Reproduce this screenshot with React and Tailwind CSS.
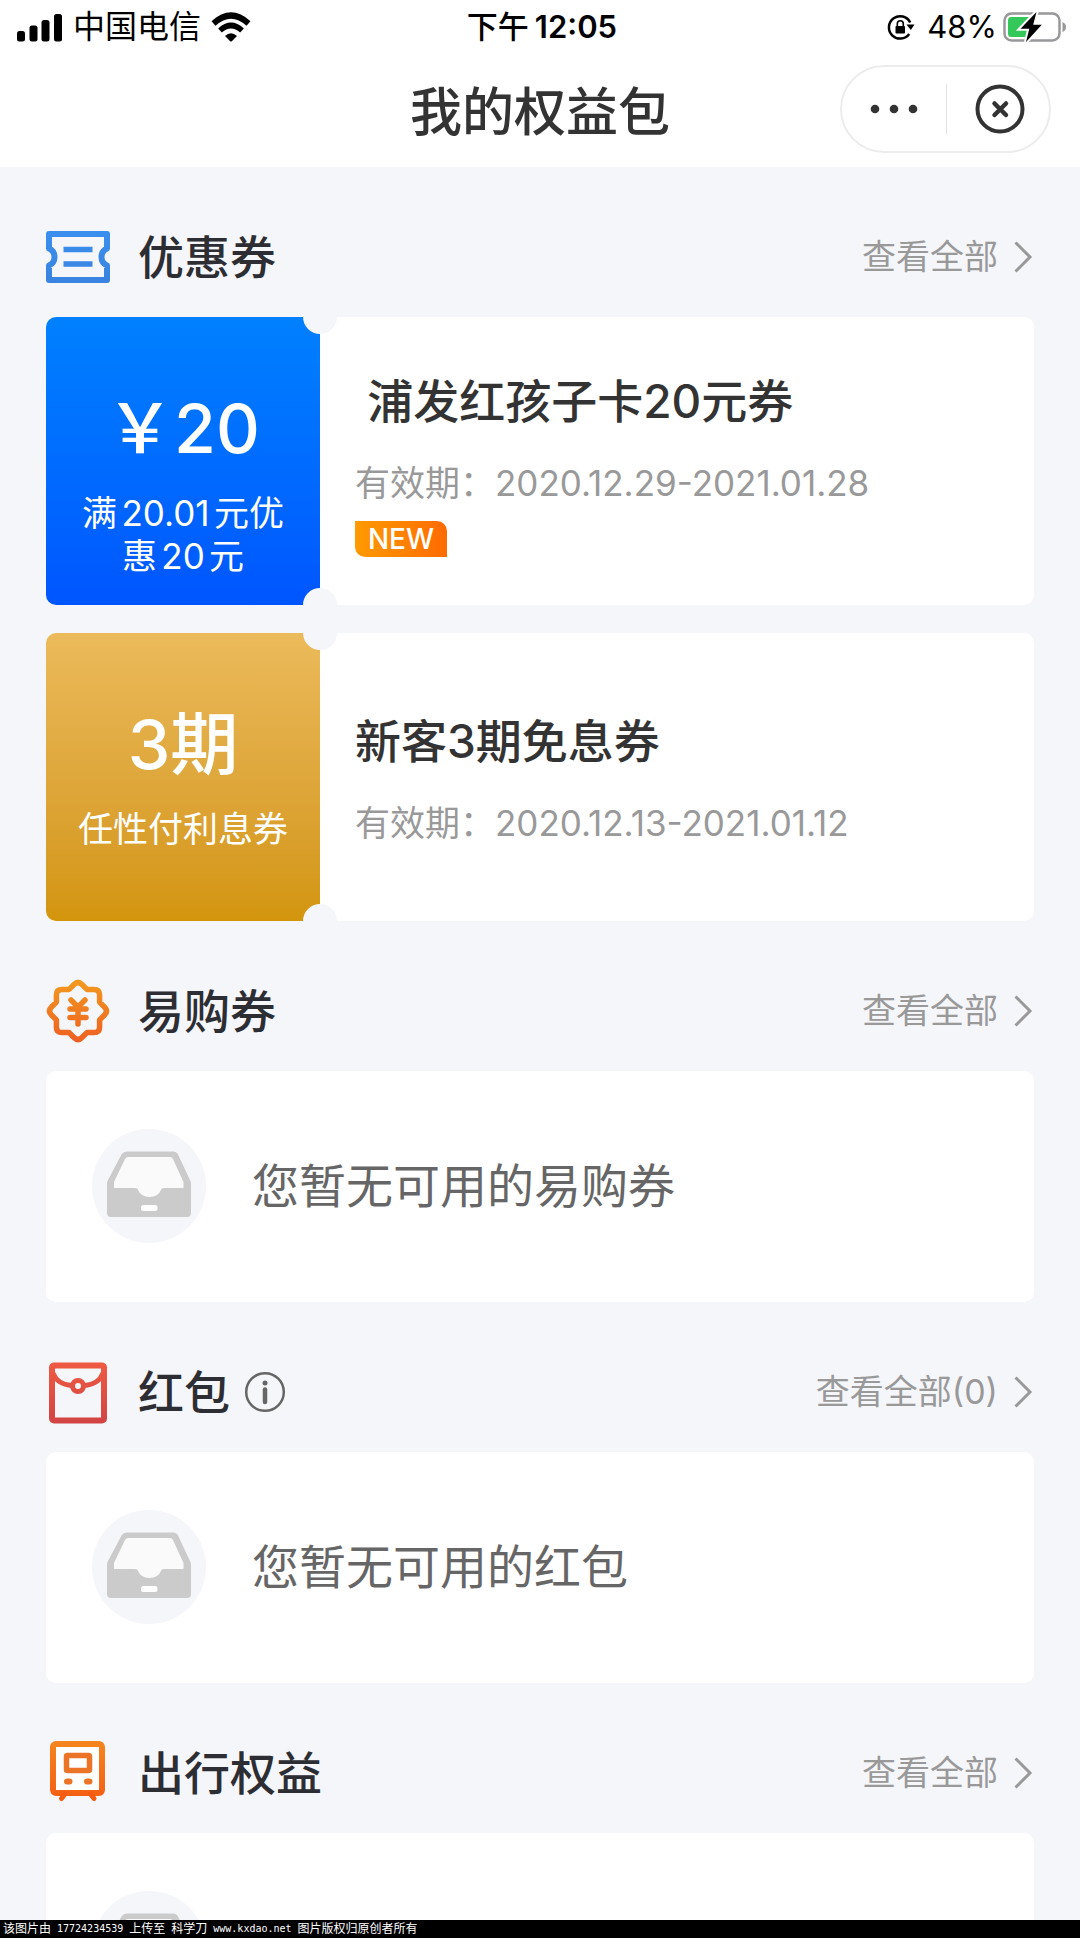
import React from "react";

function SignalIcon() {
  return (
    <svg className="h-[30px] w-[46px]" viewBox="0 0 46 30" aria-hidden="true">
      <rect x="0" y="19" width="8" height="10.5" rx="2.5" />
      <rect x="12.5" y="13.5" width="8" height="16" rx="2.5" />
      <rect x="24.5" y="8" width="8" height="21.5" rx="2.5" />
      <rect x="37" y="2" width="8" height="27.5" rx="2.5" />
    </svg>
  );
}

function WifiIcon() {
  return (
    <svg className="h-[30px] w-[40px]" viewBox="0 0 40 30" aria-hidden="true">
      <path d="M2.5 11.5Q20 -4.5 37.5 11.5" fill="none" stroke="#000" strokeWidth="6" />
      <path d="M9 18.5Q20 8.5 31 18.5" fill="none" stroke="#000" strokeWidth="5.5" />
      <path d="M14 24Q20 18.5 26 24L20.8 29.2Q20 30 19.2 29.2Z" />
    </svg>
  );
}

function RotationLockIcon() {
  return (
    <svg className="h-[28px] w-[28px]" viewBox="0 0 28 28" aria-hidden="true">
      <path d="M23.2 9.5A11.2 11.2 0 1 0 22.2 21" fill="none" stroke="#000" strokeWidth="2.5" />
      <path d="M19.5 11.5H27.5L23.8 17Z" />
      <rect x="8.5" y="13" width="9.5" height="7.5" rx="1" />
      <path d="M10.3 13.5V10.8a3 3 0 0 1 6 0V13.5" fill="none" stroke="#000" strokeWidth="1.6" />
    </svg>
  );
}

function BatteryIcon() {
  return (
    <svg className="h-[32px] w-[64px]" viewBox="0 0 64 32" aria-hidden="true">
      <rect x="1.5" y="2.5" width="55" height="27" rx="7" fill="#fff" stroke="#98989b" strokeWidth="2.5" />
      <path d="M8.5 6H28V26H8.5a3.5 3.5 0 0 1 -3.5 -3.5V9.5a3.5 3.5 0 0 1 3.5 -3.5Z" fill="#34c759" />
      <path d="M59.5 11Q63 12.500 63 16T59.5 21Z" fill="#98989b" />
      <path d="M33.5 1L17.5 17.8H26.3L23 31L38.8 13.8H30.2Z" fill="#000" stroke="#fff" strokeWidth="4" paintOrder="stroke" />
    </svg>
  );
}

function StatusBar() {
  return (
    <div className="grid h-[54px] grid-cols-3 items-center pl-[17px] pr-[13px] text-[31px] leading-[40px] text-black">
      <div className="flex items-center gap-[10px]">
        <SignalIcon />
        <span className="text-[32px]">中国电信</span>
        <WifiIcon />
      </div>
      <div className="flex items-center justify-center gap-[6px] font-semibold">
        <span className="font-medium">下午</span>
        <span>12:05</span>
      </div>
      <div className="flex items-center justify-end gap-[6px]">
        <div className="flex items-center gap-3">
          <RotationLockIcon />
          <span>48%</span>
        </div>
        <BatteryIcon />
      </div>
    </div>
  );
}

function NavBar() {
  return (
    <div className="grid h-[113px] grid-cols-[1fr_auto_1fr] items-center px-[29px]">
      <h1 className="col-start-2 pt-1 text-[52px] font-medium leading-[72px] text-[#333]">我的权益包</h1>
      <div className="mb-[3px] flex h-[88px] w-[211px] items-center justify-self-end rounded-full border-2 border-[#ececec] bg-white">
        <button type="button" aria-label="更多" className="flex h-full w-[104px] items-center justify-center">
          <svg className="h-[10px] w-[48px]" viewBox="0 0 48 10" fill="#333" aria-hidden="true">
            <circle cx="5" cy="5" r="4.3" />
            <circle cx="24" cy="5" r="4.3" />
            <circle cx="43" cy="5" r="4.3" />
          </svg>
        </button>
        <span className="h-[50px] w-px bg-[#e2e2e2]" />
        <button type="button" aria-label="关闭" className="flex h-full flex-1 items-center justify-center pl-1">
          <svg className="h-[50px] w-[50px]" viewBox="0 0 50 50" fill="none" stroke="#333" aria-hidden="true">
            <circle cx="25" cy="25" r="22.5" strokeWidth="4" />
            <path d="M19.5 19.5L31 31M31 19.5L19.5 31" strokeWidth="4.5" strokeLinecap="round" />
          </svg>
        </button>
      </div>
    </div>
  );
}

function TicketIcon() {
  return (
    <svg className="h-[52px] w-[64px]" viewBox="0 0 64 52" fill="none" aria-hidden="true">
      <defs>
        <linearGradient id="ticket" gradientUnits="userSpaceOnUse" x1="0" y1="0" x2="0" y2="52">
          <stop offset="0" stopColor="#3a8fee" />
          <stop offset="1" stopColor="#3a83e0" />
        </linearGradient>
      </defs>
      <g stroke="url(#ticket)" strokeWidth="6" strokeLinejoin="round">
        <path d="M3 3H61V17.5Q55.5 20 55.5 26T61 34.5V49H3V34.5Q8.5 32 8.5 26T3 17.5Z" />
        <path d="M17.5 18.5H46.5M17.5 33H46.5" strokeWidth="5.5" />
      </g>
    </svg>
  );
}

function YenBadgeIcon() {
  return (
    <svg className="h-[64px] w-[64px]" viewBox="-32 -32 64 64" fill="none" aria-hidden="true">
      <defs>
        <linearGradient id="yen" gradientUnits="userSpaceOnUse" x1="0" y1="-31" x2="0" y2="31">
          <stop offset="0" stopColor="#f29a1f" />
          <stop offset="1" stopColor="#ee5f22" />
        </linearGradient>
      </defs>
      <g stroke="url(#yen)" strokeLinecap="round" strokeLinejoin="round">
        <path
          strokeWidth="5.5"
          d="M-4 -26.5Q0 -30.5 4 -26.5L8.900 -21.6H16Q21.6 -21.6 21.6 -16V-8.900L26.5 -4Q30.5 0 26.5 4L21.6 8.900V16Q21.6 21.6 16 21.6H8.900L4 26.5Q0 30.5 -4 26.5L-8.900 21.6H-16Q-21.6 21.6 -21.6 16V8.900L-26.5 4Q-30.5 0 -26.5 -4L-21.6 -8.900V-16Q-21.6 -21.6 -16 -21.6H-8.900Z"
        />
        <path strokeWidth="5.5" d="M-7 -11L0 -4L7 -11M-8 -2H8M-8 6.5H8M0 -4V13" />
      </g>
    </svg>
  );
}

function EnvelopeIcon() {
  return (
    <svg className="h-[64px] w-[64px]" viewBox="0 -2 64 64" fill="none" aria-hidden="true">
      <defs>
        <linearGradient id="envelope" gradientUnits="userSpaceOnUse" x1="0" y1="0" x2="0" y2="62">
          <stop offset="0" stopColor="#ef5a42" />
          <stop offset="1" stopColor="#d14444" />
        </linearGradient>
      </defs>
      <g stroke="url(#envelope)">
        <rect x="6" y="3.5" width="52" height="55" rx="2" strokeWidth="6" />
        <path d="M7 11Q11 22 25 23.5M57 11Q53 22 39 23.5" strokeWidth="5" />
        <circle cx="32" cy="24" r="5.5" strokeWidth="5" />
      </g>
    </svg>
  );
}

function TrainIcon() {
  return (
    <svg className="h-[64px] w-[64px]" viewBox="0 0 64 64" fill="none" aria-hidden="true">
      <defs>
        <linearGradient id="train" gradientUnits="userSpaceOnUse" x1="0" y1="0" x2="0" y2="60">
          <stop offset="0" stopColor="#f5861f" />
          <stop offset="1" stopColor="#f55c12" />
        </linearGradient>
      </defs>
      <rect x="7" y="3" width="49" height="49" rx="3" fill="#fff" stroke="url(#train)" strokeWidth="6" />
      <g stroke="#ec7426">
        <rect x="20.5" y="14.5" width="23" height="15" rx="1" strokeWidth="5.5" />
        <path d="M21 40.5H23.5M41 40.5H43.5" strokeWidth="6" strokeLinecap="round" />
      </g>
      <path d="M19 53L15.5 57.5M44.5 53L48 57.5" stroke="#f55c12" strokeWidth="5" strokeLinecap="round" />
    </svg>
  );
}

function Chevron() {
  return (
    <svg className="h-[32px] w-[20px]" viewBox="0 0 20 32" fill="none" aria-hidden="true">
      <path d="M1.5 1.5L16 16L1.5 30.5" stroke="#999" strokeWidth="3" />
    </svg>
  );
}

function InfoButton() {
  return (
    <button type="button" aria-label="红包说明" className="ml-[14px]">
      <svg className="h-[42px] w-[42px]" viewBox="0 0 42 42" fill="none" stroke="#666" aria-hidden="true">
        <circle cx="21" cy="21" r="18.8" strokeWidth="2.5" />
        <circle cx="21" cy="12" r="2.5" fill="#666" stroke="none" />
        <path d="M21 18.5V31" strokeWidth="4.5" strokeLinecap="round" />
      </svg>
    </button>
  );
}

function Section({ icon, title, extra, more, children }) {
  return (
    <section>
      <header className="flex items-center justify-between pb-[30px] pt-[60px]">
        <div className="flex h-[60px] items-center">
          {icon}
          <h2 className="ml-7 text-[46px] font-medium leading-[60px] text-[#2d2e33]">{title}</h2>
          {extra}
        </div>
        <a href="#all" className="flex items-center gap-4 text-[34px] leading-[48px] text-[#999]">
          {more}
          <Chevron />
        </a>
      </header>
      {children}
    </section>
  );
}

function Coupon({ tone, amount, rule, name, period, isNew }) {
  return (
    <article className="relative flex h-[288px] overflow-hidden rounded-[10px] bg-white">
      <div className={`w-[274px] shrink-0 px-8 pt-[69px] text-center text-white ${tone}`}>
        <p className="whitespace-nowrap text-[68px] font-medium leading-[84px]">{amount}</p>
        <p className="mt-[22px] text-[35px] leading-[43px] [text-autospace:normal]">{rule}</p>
      </div>
      <div className="flex flex-1 flex-col items-start justify-center pl-[35px] pt-1">
        <h3 className="whitespace-pre text-[46px] font-medium leading-[64px] text-[#333]">{name}</h3>
        <p className="mt-6 text-[35px] leading-[52px] text-[#999]">有效期：{period}</p>
        {isNew && (
          <span className="mt-3 flex h-[36px] w-[92px] items-center justify-center rounded-bl-[10px] rounded-tr-[10px] bg-linear-to-r from-[#ff9a00] to-[#ff6a00] text-[28px] font-medium leading-[36px] text-white">
            NEW
          </span>
        )}
      </div>
      <span className="absolute -top-[17px] left-[257px] size-[34px] rounded-full bg-[#f5f6fa]" />
      <span className="absolute -bottom-[17px] left-[257px] size-[34px] rounded-full bg-[#f5f6fa]" />
    </article>
  );
}

function InboxIcon() {
  return (
    <svg className="size-[114px] shrink-0" viewBox="0 0 114 114" aria-hidden="true">
      <circle cx="57" cy="57" r="57" fill="#f5f6fa" />
      <path d="M35.5 22.5H81Q84.5 22.5 86 25.5L98 51Q99 53 99 55V84Q99 88 95 88H19Q15 88 15 84V55Q15 53 16 51L29.5 25.5Q31.5 22.5 35.5 22.5Z" fill="#cbcbcb" />
      <path d="M36 28H78Q80 28 81 30L91.5 53V59H72.5Q69 59 69 61Q66 68 57.5 68T46 61Q46 59 42.5 59H22V53L33 30Q34 28 36 28Z" fill="#fafafa" />
      <rect x="49" y="76" width="16.5" height="6" rx="2.5" fill="#fff" />
    </svg>
  );
}

function EmptyCard({ text }) {
  return (
    <div className="flex h-[231px] items-center gap-[46px] rounded-[10px] bg-white px-[46px] pb-[2px]">
      <InboxIcon />
      {text && <p className="text-[47px] leading-[64px] text-[#666]">{text}</p>}
    </div>
  );
}

export default function App() {
  return (
    <div className="flex h-screen flex-col overflow-hidden bg-[#f5f6fa] font-['Inter','Noto_Sans_CJK_SC',sans-serif]">
      <div className="shrink-0 bg-white">
        <StatusBar />
        <NavBar />
      </div>
      <main className="min-h-0 flex-1 overflow-y-auto px-[46px] [scrollbar-width:none]">
        <Section icon={<TicketIcon />} title="优惠券" more="查看全部">
          <div className="flex flex-col gap-7">
            <Coupon
              tone="bg-linear-to-b from-[#0080ff] to-[#0055ff]"
              amount="￥20"
              rule="满20.01元优惠20元"
              name=" 浦发红孩子卡20元券"
              period="2020.12.29-2021.01.28"
              isNew
            />
            <Coupon
              tone="bg-linear-to-b from-[#ebba5a] to-[#d3950a]"
              amount="3期"
              rule="任性付利息券"
              name="新客3期免息券"
              period="2020.12.13-2021.01.12"
            />
          </div>
        </Section>
        <Section icon={<YenBadgeIcon />} title="易购券" more="查看全部">
          <EmptyCard text="您暂无可用的易购券" />
        </Section>
        <Section icon={<EnvelopeIcon />} title="红包" extra={<InfoButton />} more="查看全部(0)">
          <EmptyCard text="您暂无可用的红包" />
        </Section>
        <Section icon={<TrainIcon />} title="出行权益" more="查看全部">
          <EmptyCard />
        </Section>
      </main>
      <footer className="flex h-[18px] shrink-0 items-center gap-[6px] whitespace-nowrap bg-black pl-[3px] text-[12px] leading-[18px] text-white">
        <span>该图片由</span>
        <span className="font-['DejaVu_Sans_Mono',monospace] text-[10px]">17724234539</span>
        <span>上传至</span>
        <span>科学刀</span>
        <span className="font-['DejaVu_Sans_Mono',monospace] text-[10px]">www.kxdao.net</span>
        <span>图片版权归原创者所有</span>
      </footer>
    </div>
  );
}
